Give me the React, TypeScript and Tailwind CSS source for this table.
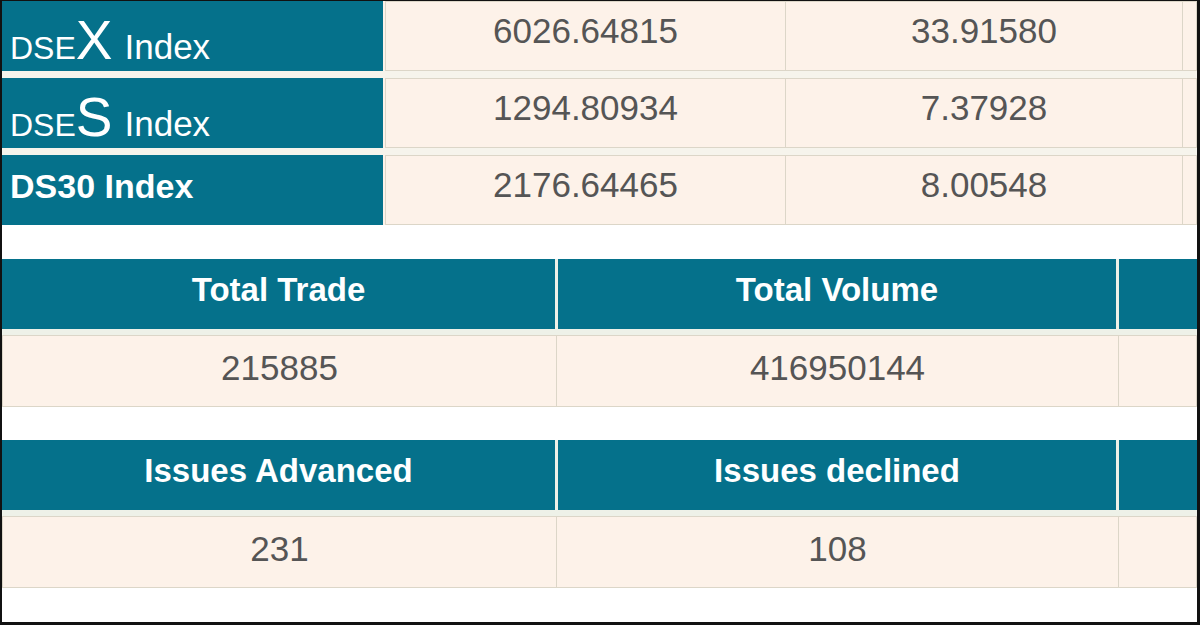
import React from "react";

const teal = "bg-[#05718b]";

type IndexRow = { label: React.ReactNode; value: string; change: string };

const bigLabel = (letter: string) => (
  <span className="flex items-baseline leading-none">
    <span className="text-[32px]">DSE</span>
    <span className="text-[55px]">{letter}</span>
    <span className="text-[35px] ml-[12px]">Index</span>
  </span>
);

const indexRows: IndexRow[] = [
  { label: bigLabel("X"), value: "6026.64815", change: "33.91580" },
  { label: bigLabel("S"), value: "1294.80934", change: "7.37928" },
  {
    label: <span className="text-[34px] font-bold">DS30 Index</span>,
    value: "2176.64465",
    change: "8.00548",
  },
];

const Cell = ({ children, className = "" }: { children?: React.ReactNode; className?: string }) => (
  <div
    className={`bg-[#fdf2e9] border border-[#dcd6c8] flex items-center justify-center text-[35px] text-[#555] ${className}`}
  >
    {children}
  </div>
);

const StatBlock = ({ heads, values }: { heads: string[]; values: string[] }) => (
  <div className="bg-[#eef1e8] flex flex-col gap-[6px]">
    <div className="grid grid-cols-[553px_558px_1fr] gap-[3px] h-[70px]">
      {heads.map((h, i) => (
        <div key={i} className={`${teal} flex items-center justify-center pb-[8px] text-white font-bold text-[33px]`}>
          {h}
        </div>
      ))}
    </div>
    <div className="grid grid-cols-[555px_562px_1fr] h-[72px]">
      {values.map((v, i) => (
        <Cell key={i} className={`pb-[6px] ${i > 0 ? "border-l-0" : ""}`}>
          {v}
        </Cell>
      ))}
    </div>
  </div>
);

export default function App() {
  return (
    <div
      className="w-[1200px] h-[625px] bg-white border-l-2 border-t border-r-[3px] border-b-[3px] border-[#111] overflow-hidden flex flex-col"
      style={{ fontFamily: '"Liberation Sans", Arial, sans-serif' }}
    >
      <div className="bg-[#f6f4ec] flex flex-col gap-[7px]">
        {indexRows.map((r, i) => (
          <div key={i} className="grid grid-cols-[381px_2px_401px_397px_1fr] h-[70px]">
            <div className={`${teal} text-white flex ${i < 2 ? "items-start pt-[12px]" : "items-center pb-[8px]"} pl-[8px]`}>
              {r.label}
            </div>
            <div className="bg-[#fdf2e9]" />
            <Cell className="pb-[10px]">{r.value}</Cell>
            <Cell className="pb-[10px] border-l-0">{r.change}</Cell>
            <Cell className="border-l-0" />
          </div>
        ))}
      </div>

      <div className="h-[34px]" />
      <StatBlock heads={["Total Trade", "Total Volume", ""]} values={["215885", "416950144", ""]} />

      <div className="h-[33px]" />
      <StatBlock heads={["Issues Advanced", "Issues declined", ""]} values={["231", "108", ""]} />
    </div>
  );
}
